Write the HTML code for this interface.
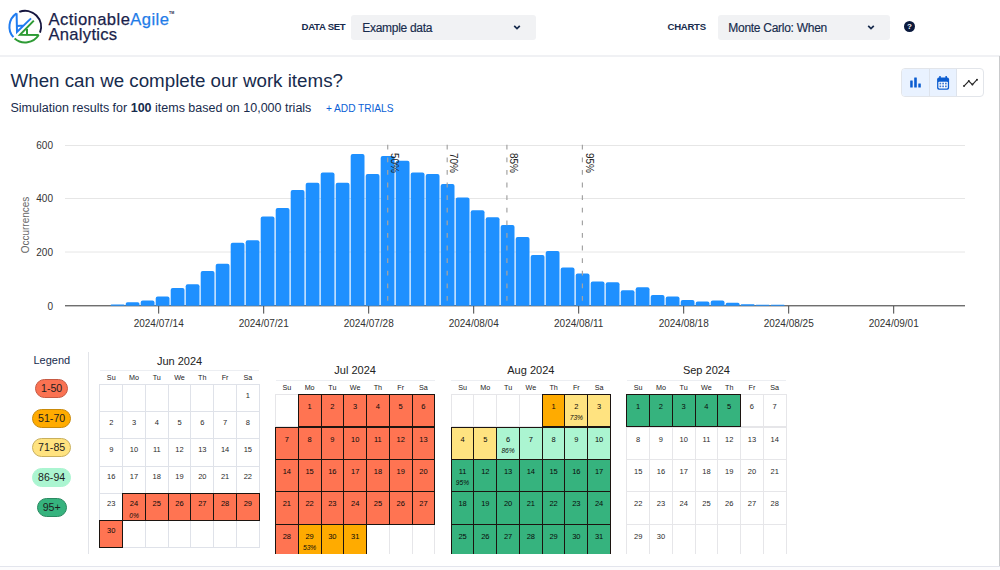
<!DOCTYPE html>
<html lang="en"><head><meta charset="utf-8"><title>ActionableAgile Analytics</title>
<style>
*{box-sizing:border-box;margin:0;padding:0}
html,body{width:1000px;height:570px;overflow:hidden;background:#fff;font-family:"Liberation Sans",Arial,sans-serif;color:#172b4d}
.abs{position:absolute}
#hdr{position:absolute;left:0;top:0;width:1000px;height:55px;background:#fff}
#hb{position:absolute;left:0;top:55px;width:1000px;height:2px;background:#f0f1f4}
#rb{position:absolute;left:998.9px;top:56px;width:1.1px;height:510.5px;background:#c9cacc}
#bb{position:absolute;left:0;top:565.8px;width:1000px;height:1.5px;background:#e3e5ed}
#bf{position:absolute;left:0;top:567.3px;width:1000px;height:2.7px;background:#fcfcfd}
.lg1{position:absolute;left:48.5px;top:9.5px;font-size:16.6px;line-height:19px;color:#1a1f4b;letter-spacing:0.43px;-webkit-text-stroke:0.25px;white-space:nowrap}
.lg1 b{font-weight:normal;color:#1f7ce8}
.lg1 sup{font-size:3.6px;font-weight:bold;-webkit-text-stroke:0;position:relative;top:-5.2px;margin-left:-0.3px;vertical-align:top;color:#1a1f4b;letter-spacing:0}
.lg2{position:absolute;left:48.5px;top:24.5px;font-size:16.6px;line-height:19px;color:#1a1f4b;letter-spacing:0.28px;-webkit-text-stroke:0.25px;white-space:nowrap}
.lab{position:absolute;font-size:9.6px;letter-spacing:-0.28px;font-weight:bold;color:#172b4d;top:20.4px;line-height:13px;white-space:nowrap}
.sel{position:absolute;top:14.6px;height:25px;background:#f1f2f4;border-radius:3px;font-size:12px;letter-spacing:-0.28px;-webkit-text-stroke:0.15px;line-height:26px;padding-left:10.8px;color:#172b4d;white-space:nowrap}
.sel svg{position:absolute;top:9.6px;margin-left:0}
h1{position:absolute;left:10.5px;top:69px;font-size:18.75px;font-weight:normal;line-height:24px;color:#172b4d;white-space:nowrap}
.sub{position:absolute;left:10.5px;top:99.5px;font-size:12.5px;line-height:16px;color:#172b4d;white-space:nowrap}
.add{position:absolute;left:326px;top:100.5px;font-size:10.2px;letter-spacing:-0.05px;line-height:16px;color:#0c5fd6;white-space:nowrap}
.tg{position:absolute;left:901.3px;top:68.4px;width:83px;height:28.2px;border:1px solid #e2e5ea;border-radius:4px;background:#fff;overflow:hidden}
.tg div{position:absolute;top:0;height:27px}
.chart{position:absolute;left:0;top:0;font-family:"Liberation Sans",Arial,sans-serif}
.legt{position:absolute;left:21.8px;width:60px;text-align:center;top:352.7px;font-size:11px;line-height:14px;color:#172b4d}
.pill{position:absolute;height:19px;border-radius:10px;border:1px solid;font-size:10.6px;line-height:17px;text-align:center;color:#1d1d1d}
#vd{position:absolute;left:87.8px;top:352px;width:1.2px;height:202px;background:#e2e4e9}
#cals{position:absolute;left:0;top:0;width:1000px;height:553.6px;overflow:hidden}
.ct{position:absolute;width:159.3px;text-align:center;font-size:11px;line-height:14px;color:#222;white-space:nowrap}
.hl{position:absolute;width:159.3px;height:1px;background:#eceef2}
.dh{position:absolute;width:22.76px;text-align:center;font-size:7.2px;color:#222}
.c{position:absolute;width:23.76px;border:1px solid #e3e5ea;margin:-0.5px 0 0 -0.5px;text-align:center;font-size:7.5px;color:#2a2a2a;}
.c.s{height:28.15px!important;padding-top:5.7px;line-height:9px}
.c.b{height:33.4px!important;padding-top:7.2px;line-height:9px}
.c.s{border-color:#dfe2e9}
.c.b{border-color:#e6e6e9}
.c.k{border:1.15px solid #1c1410;color:#0a0a0a;z-index:2}
.c.k.s{padding-top:5.55px}
.c.k.b{padding-top:7.05px}
.c i{display:block;font-size:6.7px;line-height:8px;margin-top:3.3px}
</style></head><body>
<div id="hdr">
<svg class="abs" style="left:0;top:0" width="60" height="55" viewBox="0 0 60 55" fill="none" stroke-width="2" stroke-linecap="butt" stroke-linejoin="miter">
<path d="M16.6 13.3 A16 16 0 0 0 13.4 37.2" stroke="#1f7cf0"/>
<path d="M16.6 13.3 L17 32 L31 18.4 M17.2 25.9 L23.6 25.6" stroke="#1f7cf0"/>
<path d="M19.3 11.9 A16 16 0 0 1 40 32.6" stroke="#16163f"/>
<path d="M14.6 38.5 A16 16 0 0 0 38.7 35" stroke="#2e9b35"/>
<path d="M38.7 35 L20 34.8 L33.8 20.6 M27 29 L27 34.8" stroke="#2e9b35"/>
</svg>
<div class="lg1">Actionable<b>Agile</b><sup>TM</sup></div>
<div class="lg2">Analytics</div>
<div class="lab" style="left:301.5px">DATA SET</div>
<div class="sel" style="left:351.4px;width:184.8px">Example data<svg style="left:162px" width="8" height="7" viewBox="0 0 8 7"><path d="M1.2 1.8L4 4.6L6.8 1.8" fill="none" stroke="#172b4d" stroke-width="1.7"/></svg></div>
<div class="lab" style="left:667.5px">CHARTS</div>
<div class="sel" style="left:717.5px;width:172.5px">Monte Carlo: When<svg style="left:149.5px" width="8" height="7" viewBox="0 0 8 7"><path d="M1.2 1.8L4 4.6L6.8 1.8" fill="none" stroke="#172b4d" stroke-width="1.7"/></svg></div>
<div class="abs" style="left:904px;top:21px;width:11px;height:11px;border-radius:50%;background:#0b1a3d;color:#fff;font-size:8px;font-weight:bold;line-height:11.4px;text-align:center">?</div>
</div>
<div id="hb"></div><div id="rb"></div><div id="bb"></div><div id="bf"></div>
<h1>When can we complete our work items?</h1>
<div class="sub">Simulation results for <b>100</b> items based on 10,000 trials</div>
<div class="add">+ ADD TRIALS</div>
<div class="tg">
<div style="left:0;width:27.9px;background:#e9f2ff;border-right:1px solid #dde3ec"></div>
<div style="left:27.9px;width:27.1px;background:#e9f2ff;border-right:1px solid #dde3ec"></div>
<svg class="abs" style="left:0;top:0" width="83" height="27" viewBox="901.8 68.9 83 27">
<g fill="#0b5cd0"><rect x="910" y="80.3" width="2.5" height="7.2" rx=".4"/><rect x="914" y="77.3" width="2.6" height="10.2" rx=".4"/><rect x="918.1" y="83.3" width="2.5" height="4.2" rx=".4"/></g>
<g fill="#0b5cd0"><rect x="936.9" y="77.5" width="12" height="12.2" rx="1.8"/><rect x="939" y="75.9" width="1.6" height="3" rx=".6"/><rect x="945.2" y="75.9" width="1.6" height="3" rx=".6"/></g>
<rect x="938.2" y="81.6" width="9.4" height="6.7" rx=".8" fill="#fff"/>
<g fill="#3f7bd6"><rect x="939.3" y="82.6" width="1.7" height="1.7"/><rect x="942.05" y="82.6" width="1.7" height="1.7"/><rect x="944.8" y="82.6" width="1.7" height="1.7"/><rect x="939.3" y="85.4" width="1.7" height="1.7"/><rect x="942.05" y="85.4" width="1.7" height="1.7"/><rect x="944.8" y="85.4" width="1.7" height="1.7"/></g>
<path d="M963.8 86 L968.6 81 L972.2 84.5 L976.8 79.6" fill="none" stroke="#2b2b2b" stroke-width="1.2"/>
<g fill="#2b2b2b"><circle cx="963.8" cy="86" r="1"/><circle cx="968.6" cy="81" r="1"/><circle cx="972.2" cy="84.5" r="1"/><circle cx="976.8" cy="79.6" r="1"/></g>
</svg>
</div>
<svg class="chart" width="1000" height="340" viewBox="0 0 1000 340">
<g stroke="#e6e6e6" stroke-width="1"><line x1="65" x2="965" y1="145.5" y2="145.5"/><line x1="65" x2="965" y1="198.5" y2="198.5"/><line x1="65" x2="965" y1="252" y2="252"/></g>
<line x1="65" x2="965" y1="305.8" y2="305.8" stroke="#333" stroke-width="1"/>
<g fill="#1e90ff"><path d="M110.7 305.8V305.1Q110.7 304.4 111.4 304.4H123.8Q124.5 304.4 124.5 305.1V305.8Z"/><path d="M125.7 305.8V304.0Q125.7 302.2 127.5 302.2H137.7Q139.5 302.2 139.5 304.0V305.8Z"/><path d="M140.7 305.8V302.6Q140.7 300.6 142.7 300.6H152.5Q154.5 300.6 154.5 302.6V305.8Z"/><path d="M155.7 305.8V298.6Q155.7 296.6 157.7 296.6H167.5Q169.5 296.6 169.5 298.6V305.8Z"/><path d="M170.7 305.8V290.0Q170.7 288.0 172.7 288.0H182.5Q184.5 288.0 184.5 290.0V305.8Z"/><path d="M185.7 305.8V286.2Q185.7 284.2 187.7 284.2H197.5Q199.5 284.2 199.5 286.2V305.8Z"/><path d="M200.7 305.8V273.0Q200.7 271.0 202.7 271.0H212.5Q214.5 271.0 214.5 273.0V305.8Z"/><path d="M215.7 305.8V265.7Q215.7 263.7 217.7 263.7H227.5Q229.5 263.7 229.5 265.7V305.8Z"/><path d="M230.7 305.8V244.7Q230.7 242.7 232.7 242.7H242.5Q244.5 242.7 244.5 244.7V305.8Z"/><path d="M245.7 305.8V242.2Q245.7 240.2 247.7 240.2H257.5Q259.5 240.2 259.5 242.2V305.8Z"/><path d="M260.7 305.8V218.6Q260.7 216.6 262.7 216.6H272.5Q274.5 216.6 274.5 218.6V305.8Z"/><path d="M275.7 305.8V210.1Q275.7 208.1 277.7 208.1H287.5Q289.5 208.1 289.5 210.1V305.8Z"/><path d="M290.7 305.8V192.0Q290.7 190.0 292.7 190.0H302.5Q304.5 190.0 304.5 192.0V305.8Z"/><path d="M305.7 305.8V184.8Q305.7 182.8 307.7 182.8H317.5Q319.5 182.8 319.5 184.8V305.8Z"/><path d="M320.7 305.8V174.6Q320.7 172.6 322.7 172.6H332.5Q334.5 172.6 334.5 174.6V305.8Z"/><path d="M335.7 305.8V184.8Q335.7 182.8 337.7 182.8H347.5Q349.5 182.8 349.5 184.8V305.8Z"/><path d="M350.7 305.8V155.9Q350.7 153.9 352.7 153.9H362.5Q364.5 153.9 364.5 155.9V305.8Z"/><path d="M365.7 305.8V176.0Q365.7 174.0 367.7 174.0H377.5Q379.5 174.0 379.5 176.0V305.8Z"/><path d="M380.7 305.8V158.0Q380.7 156.0 382.7 156.0H392.5Q394.5 156.0 394.5 158.0V305.8Z"/><path d="M395.7 305.8V162.8Q395.7 160.8 397.7 160.8H407.5Q409.5 160.8 409.5 162.8V305.8Z"/><path d="M410.7 305.8V174.5Q410.7 172.5 412.7 172.5H422.5Q424.5 172.5 424.5 174.5V305.8Z"/><path d="M425.7 305.8V176.1Q425.7 174.1 427.7 174.1H437.5Q439.5 174.1 439.5 176.1V305.8Z"/><path d="M440.7 305.8V186.0Q440.7 184.0 442.7 184.0H452.5Q454.5 184.0 454.5 186.0V305.8Z"/><path d="M455.7 305.8V199.6Q455.7 197.6 457.7 197.6H467.5Q469.5 197.6 469.5 199.6V305.8Z"/><path d="M470.7 305.8V212.2Q470.7 210.2 472.7 210.2H482.5Q484.5 210.2 484.5 212.2V305.8Z"/><path d="M485.7 305.8V219.2Q485.7 217.2 487.7 217.2H497.5Q499.5 217.2 499.5 219.2V305.8Z"/><path d="M500.7 305.8V227.0Q500.7 225.0 502.7 225.0H512.5Q514.5 225.0 514.5 227.0V305.8Z"/><path d="M515.7 305.8V239.1Q515.7 237.1 517.7 237.1H527.5Q529.5 237.1 529.5 239.1V305.8Z"/><path d="M530.7 305.8V256.9Q530.7 254.9 532.7 254.9H542.5Q544.5 254.9 544.5 256.9V305.8Z"/><path d="M545.7 305.8V252.9Q545.7 250.9 547.7 250.9H557.5Q559.5 250.9 559.5 252.9V305.8Z"/><path d="M560.7 305.8V269.5Q560.7 267.5 562.7 267.5H572.5Q574.5 267.5 574.5 269.5V305.8Z"/><path d="M575.7 305.8V275.5Q575.7 273.5 577.7 273.5H587.5Q589.5 273.5 589.5 275.5V305.8Z"/><path d="M590.7 305.8V283.5Q590.7 281.5 592.7 281.5H602.5Q604.5 281.5 604.5 283.5V305.8Z"/><path d="M605.7 305.8V284.2Q605.7 282.2 607.7 282.2H617.5Q619.5 282.2 619.5 284.2V305.8Z"/><path d="M620.7 305.8V292.3Q620.7 290.3 622.7 290.3H632.5Q634.5 290.3 634.5 292.3V305.8Z"/><path d="M635.7 305.8V289.2Q635.7 287.2 637.7 287.2H647.5Q649.5 287.2 649.5 289.2V305.8Z"/><path d="M650.7 305.8V297.1Q650.7 295.1 652.7 295.1H662.5Q664.5 295.1 664.5 297.1V305.8Z"/><path d="M665.7 305.8V298.4Q665.7 296.4 667.7 296.4H677.5Q679.5 296.4 679.5 298.4V305.8Z"/><path d="M680.7 305.8V301.9Q680.7 299.9 682.7 299.9H692.5Q694.5 299.9 694.5 301.9V305.8Z"/><path d="M695.7 305.8V303.5Q695.7 301.5 697.7 301.5H707.5Q709.5 301.5 709.5 303.5V305.8Z"/><path d="M710.7 305.8V302.6Q710.7 300.6 712.7 300.6H722.5Q724.5 300.6 724.5 302.6V305.8Z"/><path d="M725.7 305.8V304.3Q725.7 302.8 727.2 302.8H738.0Q739.5 302.8 739.5 304.3V305.8Z"/><path d="M740.7 305.8V305.1Q740.7 304.3 741.5 304.3H753.8Q754.5 304.3 754.5 305.1V305.8Z"/><path d="M755.7 305.8V305.3Q755.7 304.8 756.2 304.8H769.0Q769.5 304.8 769.5 305.3V305.8Z"/><path d="M770.7 305.8V305.3Q770.7 304.8 771.2 304.8H784.0Q784.5 304.8 784.5 305.3V305.8Z"/></g>
<g stroke="#a4a4a4" stroke-width="1.2" stroke-dasharray="4.8 7.8"><line x1="387.7" x2="387.7" y1="144.8" y2="305" /><line x1="447.2" x2="447.2" y1="144.8" y2="305" /><line x1="506.9" x2="506.9" y1="144.8" y2="305" /><line x1="582.4" x2="582.4" y1="144.8" y2="305" /></g>
<g font-size="10" fill="#222"><text transform="translate(390.9,153) rotate(90)">50%</text><text transform="translate(450.4,153) rotate(90)">70%</text><text transform="translate(510.09999999999997,153) rotate(90)">85%</text><text transform="translate(585.6,153) rotate(90)">95%</text></g>
<g stroke="#444" stroke-width="1"><line x1="158.7" x2="158.7" y1="306" y2="313.6"/><line x1="263.7" x2="263.7" y1="306" y2="313.6"/><line x1="368.7" x2="368.7" y1="306" y2="313.6"/><line x1="473.7" x2="473.7" y1="306" y2="313.6"/><line x1="578.7" x2="578.7" y1="306" y2="313.6"/><line x1="683.7" x2="683.7" y1="306" y2="313.6"/><line x1="788.7" x2="788.7" y1="306" y2="313.6"/><line x1="893.7" x2="893.7" y1="306" y2="313.6"/></g>
<g font-size="10" fill="#333"><text x="158.7" y="327.3" text-anchor="middle">2024/07/14</text><text x="263.7" y="327.3" text-anchor="middle">2024/07/21</text><text x="368.7" y="327.3" text-anchor="middle">2024/07/28</text><text x="473.7" y="327.3" text-anchor="middle">2024/08/04</text><text x="578.7" y="327.3" text-anchor="middle">2024/08/11</text><text x="683.7" y="327.3" text-anchor="middle">2024/08/18</text><text x="788.7" y="327.3" text-anchor="middle">2024/08/25</text><text x="893.7" y="327.3" text-anchor="middle">2024/09/01</text><text x="53" y="149" text-anchor="end">600</text><text x="53" y="202" text-anchor="end">400</text><text x="53" y="255.5" text-anchor="end">200</text><text x="53" y="309.5" text-anchor="end">0</text></g>
<text font-size="10" fill="#666" text-anchor="middle" transform="translate(28.5,225) rotate(-90)">Occurrences</text>
</svg>
<div class="legt">Legend</div>
<div class="pill" style="left:35.1px;width:33.1px;top:378.6px;background:#fa7252;border-color:#c65a43">1-50</div>
<div class="pill" style="left:32.2px;width:38.9px;top:408.5px;background:#ffab00;border-color:#c98a0a">51-70</div>
<div class="pill" style="left:32.2px;width:38.9px;top:438.3px;background:#ffe380;border-color:#c9b05c">71-85</div>
<div class="pill" style="left:32.2px;width:38.9px;top:468.2px;background:#abf5d1;border-color:#abf5d1">86-94</div>
<div class="pill" style="left:36.7px;width:29.9px;top:498px;background:#36b37e;border-color:#2a8a61">95+</div>
<div id="vd"></div>
<div id="cals">
<div class="ct" style="left:99.9px;top:354px">Jun 2024</div>
<div class="hl" style="left:99.9px;top:370px"></div>
<div class="dh" style="left:99.90px;top:371px;height:13.6px;line-height:13.6px">Su</div>
<div class="dh" style="left:122.66px;top:371px;height:13.6px;line-height:13.6px">Mo</div>
<div class="dh" style="left:145.41px;top:371px;height:13.6px;line-height:13.6px">Tu</div>
<div class="dh" style="left:168.17px;top:371px;height:13.6px;line-height:13.6px">We</div>
<div class="dh" style="left:190.93px;top:371px;height:13.6px;line-height:13.6px">Th</div>
<div class="dh" style="left:213.69px;top:371px;height:13.6px;line-height:13.6px">Fr</div>
<div class="dh" style="left:236.44px;top:371px;height:13.6px;line-height:13.6px">Sa</div>
<div class="c s" style="left:99.90px;top:384.60px;height:27.15px"></div>
<div class="c s" style="left:122.66px;top:384.60px;height:27.15px"></div>
<div class="c s" style="left:145.41px;top:384.60px;height:27.15px"></div>
<div class="c s" style="left:168.17px;top:384.60px;height:27.15px"></div>
<div class="c s" style="left:190.93px;top:384.60px;height:27.15px"></div>
<div class="c s" style="left:213.69px;top:384.60px;height:27.15px"></div>
<div class="c s" style="left:236.44px;top:384.60px;height:27.15px">1</div>
<div class="c s" style="left:99.90px;top:411.75px;height:27.15px">2</div>
<div class="c s" style="left:122.66px;top:411.75px;height:27.15px">3</div>
<div class="c s" style="left:145.41px;top:411.75px;height:27.15px">4</div>
<div class="c s" style="left:168.17px;top:411.75px;height:27.15px">5</div>
<div class="c s" style="left:190.93px;top:411.75px;height:27.15px">6</div>
<div class="c s" style="left:213.69px;top:411.75px;height:27.15px">7</div>
<div class="c s" style="left:236.44px;top:411.75px;height:27.15px">8</div>
<div class="c s" style="left:99.90px;top:438.90px;height:27.15px">9</div>
<div class="c s" style="left:122.66px;top:438.90px;height:27.15px">10</div>
<div class="c s" style="left:145.41px;top:438.90px;height:27.15px">11</div>
<div class="c s" style="left:168.17px;top:438.90px;height:27.15px">12</div>
<div class="c s" style="left:190.93px;top:438.90px;height:27.15px">13</div>
<div class="c s" style="left:213.69px;top:438.90px;height:27.15px">14</div>
<div class="c s" style="left:236.44px;top:438.90px;height:27.15px">15</div>
<div class="c s" style="left:99.90px;top:466.05px;height:27.15px">16</div>
<div class="c s" style="left:122.66px;top:466.05px;height:27.15px">17</div>
<div class="c s" style="left:145.41px;top:466.05px;height:27.15px">18</div>
<div class="c s" style="left:168.17px;top:466.05px;height:27.15px">19</div>
<div class="c s" style="left:190.93px;top:466.05px;height:27.15px">20</div>
<div class="c s" style="left:213.69px;top:466.05px;height:27.15px">21</div>
<div class="c s" style="left:236.44px;top:466.05px;height:27.15px">22</div>
<div class="c s" style="left:99.90px;top:493.20px;height:27.15px">23</div>
<div class="c k s" style="left:122.66px;top:493.20px;height:27.15px;background:#ff7452">24<i>0%</i></div>
<div class="c k s" style="left:145.41px;top:493.20px;height:27.15px;background:#ff7452">25</div>
<div class="c k s" style="left:168.17px;top:493.20px;height:27.15px;background:#ff7452">26</div>
<div class="c k s" style="left:190.93px;top:493.20px;height:27.15px;background:#ff7452">27</div>
<div class="c k s" style="left:213.69px;top:493.20px;height:27.15px;background:#ff7452">28</div>
<div class="c k s" style="left:236.44px;top:493.20px;height:27.15px;background:#ff7452">29</div>
<div class="c k s" style="left:99.90px;top:520.35px;height:27.15px;background:#ff7452">30</div>
<div class="c s" style="left:122.66px;top:520.35px;height:27.15px"></div>
<div class="c s" style="left:145.41px;top:520.35px;height:27.15px"></div>
<div class="c s" style="left:168.17px;top:520.35px;height:27.15px"></div>
<div class="c s" style="left:190.93px;top:520.35px;height:27.15px"></div>
<div class="c s" style="left:213.69px;top:520.35px;height:27.15px"></div>
<div class="c s" style="left:236.44px;top:520.35px;height:27.15px"></div>
<div class="ct" style="left:275.5px;top:363.3px">Jul 2024</div>
<div class="hl" style="left:275.5px;top:380px"></div>
<div class="dh" style="left:275.50px;top:381px;height:13.6px;line-height:13.6px">Su</div>
<div class="dh" style="left:298.26px;top:381px;height:13.6px;line-height:13.6px">Mo</div>
<div class="dh" style="left:321.01px;top:381px;height:13.6px;line-height:13.6px">Tu</div>
<div class="dh" style="left:343.77px;top:381px;height:13.6px;line-height:13.6px">We</div>
<div class="dh" style="left:366.53px;top:381px;height:13.6px;line-height:13.6px">Th</div>
<div class="dh" style="left:389.29px;top:381px;height:13.6px;line-height:13.6px">Fr</div>
<div class="dh" style="left:412.04px;top:381px;height:13.6px;line-height:13.6px">Sa</div>
<div class="c b" style="left:275.50px;top:394.60px;height:32.4px"></div>
<div class="c k b" style="left:298.26px;top:394.60px;height:32.4px;background:#ff7452">1</div>
<div class="c k b" style="left:321.01px;top:394.60px;height:32.4px;background:#ff7452">2</div>
<div class="c k b" style="left:343.77px;top:394.60px;height:32.4px;background:#ff7452">3</div>
<div class="c k b" style="left:366.53px;top:394.60px;height:32.4px;background:#ff7452">4</div>
<div class="c k b" style="left:389.29px;top:394.60px;height:32.4px;background:#ff7452">5</div>
<div class="c k b" style="left:412.04px;top:394.60px;height:32.4px;background:#ff7452">6</div>
<div class="c k b" style="left:275.50px;top:427.00px;height:32.4px;background:#ff7452">7</div>
<div class="c k b" style="left:298.26px;top:427.00px;height:32.4px;background:#ff7452">8</div>
<div class="c k b" style="left:321.01px;top:427.00px;height:32.4px;background:#ff7452">9</div>
<div class="c k b" style="left:343.77px;top:427.00px;height:32.4px;background:#ff7452">10</div>
<div class="c k b" style="left:366.53px;top:427.00px;height:32.4px;background:#ff7452">11</div>
<div class="c k b" style="left:389.29px;top:427.00px;height:32.4px;background:#ff7452">12</div>
<div class="c k b" style="left:412.04px;top:427.00px;height:32.4px;background:#ff7452">13</div>
<div class="c k b" style="left:275.50px;top:459.40px;height:32.4px;background:#ff7452">14</div>
<div class="c k b" style="left:298.26px;top:459.40px;height:32.4px;background:#ff7452">15</div>
<div class="c k b" style="left:321.01px;top:459.40px;height:32.4px;background:#ff7452">16</div>
<div class="c k b" style="left:343.77px;top:459.40px;height:32.4px;background:#ff7452">17</div>
<div class="c k b" style="left:366.53px;top:459.40px;height:32.4px;background:#ff7452">18</div>
<div class="c k b" style="left:389.29px;top:459.40px;height:32.4px;background:#ff7452">19</div>
<div class="c k b" style="left:412.04px;top:459.40px;height:32.4px;background:#ff7452">20</div>
<div class="c k b" style="left:275.50px;top:491.80px;height:32.4px;background:#ff7452">21</div>
<div class="c k b" style="left:298.26px;top:491.80px;height:32.4px;background:#ff7452">22</div>
<div class="c k b" style="left:321.01px;top:491.80px;height:32.4px;background:#ff7452">23</div>
<div class="c k b" style="left:343.77px;top:491.80px;height:32.4px;background:#ff7452">24</div>
<div class="c k b" style="left:366.53px;top:491.80px;height:32.4px;background:#ff7452">25</div>
<div class="c k b" style="left:389.29px;top:491.80px;height:32.4px;background:#ff7452">26</div>
<div class="c k b" style="left:412.04px;top:491.80px;height:32.4px;background:#ff7452">27</div>
<div class="c k b" style="left:275.50px;top:524.20px;height:32.4px;background:#ff7452">28</div>
<div class="c k b" style="left:298.26px;top:524.20px;height:32.4px;background:#ffab00">29<i>53%</i></div>
<div class="c k b" style="left:321.01px;top:524.20px;height:32.4px;background:#ffab00">30</div>
<div class="c k b" style="left:343.77px;top:524.20px;height:32.4px;background:#ffab00">31</div>
<div class="c b" style="left:366.53px;top:524.20px;height:32.4px"></div>
<div class="c b" style="left:389.29px;top:524.20px;height:32.4px"></div>
<div class="c b" style="left:412.04px;top:524.20px;height:32.4px"></div>
<div class="ct" style="left:451.2px;top:363.3px">Aug 2024</div>
<div class="hl" style="left:451.2px;top:380px"></div>
<div class="dh" style="left:451.20px;top:381px;height:13.6px;line-height:13.6px">Su</div>
<div class="dh" style="left:473.96px;top:381px;height:13.6px;line-height:13.6px">Mo</div>
<div class="dh" style="left:496.71px;top:381px;height:13.6px;line-height:13.6px">Tu</div>
<div class="dh" style="left:519.47px;top:381px;height:13.6px;line-height:13.6px">We</div>
<div class="dh" style="left:542.23px;top:381px;height:13.6px;line-height:13.6px">Th</div>
<div class="dh" style="left:564.99px;top:381px;height:13.6px;line-height:13.6px">Fr</div>
<div class="dh" style="left:587.74px;top:381px;height:13.6px;line-height:13.6px">Sa</div>
<div class="c b" style="left:451.20px;top:394.60px;height:32.4px"></div>
<div class="c b" style="left:473.96px;top:394.60px;height:32.4px"></div>
<div class="c b" style="left:496.71px;top:394.60px;height:32.4px"></div>
<div class="c b" style="left:519.47px;top:394.60px;height:32.4px"></div>
<div class="c k b" style="left:542.23px;top:394.60px;height:32.4px;background:#ffab00">1</div>
<div class="c k b" style="left:564.99px;top:394.60px;height:32.4px;background:#ffe380">2<i>73%</i></div>
<div class="c k b" style="left:587.74px;top:394.60px;height:32.4px;background:#ffe380">3</div>
<div class="c k b" style="left:451.20px;top:427.00px;height:32.4px;background:#ffe380">4</div>
<div class="c k b" style="left:473.96px;top:427.00px;height:32.4px;background:#ffe380">5</div>
<div class="c k b" style="left:496.71px;top:427.00px;height:32.4px;background:#abf5d1">6<i>86%</i></div>
<div class="c k b" style="left:519.47px;top:427.00px;height:32.4px;background:#abf5d1">7</div>
<div class="c k b" style="left:542.23px;top:427.00px;height:32.4px;background:#abf5d1">8</div>
<div class="c k b" style="left:564.99px;top:427.00px;height:32.4px;background:#abf5d1">9</div>
<div class="c k b" style="left:587.74px;top:427.00px;height:32.4px;background:#abf5d1">10</div>
<div class="c k b" style="left:451.20px;top:459.40px;height:32.4px;background:#36b37e">11<i>95%</i></div>
<div class="c k b" style="left:473.96px;top:459.40px;height:32.4px;background:#36b37e">12</div>
<div class="c k b" style="left:496.71px;top:459.40px;height:32.4px;background:#36b37e">13</div>
<div class="c k b" style="left:519.47px;top:459.40px;height:32.4px;background:#36b37e">14</div>
<div class="c k b" style="left:542.23px;top:459.40px;height:32.4px;background:#36b37e">15</div>
<div class="c k b" style="left:564.99px;top:459.40px;height:32.4px;background:#36b37e">16</div>
<div class="c k b" style="left:587.74px;top:459.40px;height:32.4px;background:#36b37e">17</div>
<div class="c k b" style="left:451.20px;top:491.80px;height:32.4px;background:#36b37e">18</div>
<div class="c k b" style="left:473.96px;top:491.80px;height:32.4px;background:#36b37e">19</div>
<div class="c k b" style="left:496.71px;top:491.80px;height:32.4px;background:#36b37e">20</div>
<div class="c k b" style="left:519.47px;top:491.80px;height:32.4px;background:#36b37e">21</div>
<div class="c k b" style="left:542.23px;top:491.80px;height:32.4px;background:#36b37e">22</div>
<div class="c k b" style="left:564.99px;top:491.80px;height:32.4px;background:#36b37e">23</div>
<div class="c k b" style="left:587.74px;top:491.80px;height:32.4px;background:#36b37e">24</div>
<div class="c k b" style="left:451.20px;top:524.20px;height:32.4px;background:#36b37e">25</div>
<div class="c k b" style="left:473.96px;top:524.20px;height:32.4px;background:#36b37e">26</div>
<div class="c k b" style="left:496.71px;top:524.20px;height:32.4px;background:#36b37e">27</div>
<div class="c k b" style="left:519.47px;top:524.20px;height:32.4px;background:#36b37e">28</div>
<div class="c k b" style="left:542.23px;top:524.20px;height:32.4px;background:#36b37e">29</div>
<div class="c k b" style="left:564.99px;top:524.20px;height:32.4px;background:#36b37e">30</div>
<div class="c k b" style="left:587.74px;top:524.20px;height:32.4px;background:#36b37e">31</div>
<div class="ct" style="left:626.8px;top:363.3px">Sep 2024</div>
<div class="hl" style="left:626.8px;top:380px"></div>
<div class="dh" style="left:626.80px;top:381px;height:13.6px;line-height:13.6px">Su</div>
<div class="dh" style="left:649.56px;top:381px;height:13.6px;line-height:13.6px">Mo</div>
<div class="dh" style="left:672.31px;top:381px;height:13.6px;line-height:13.6px">Tu</div>
<div class="dh" style="left:695.07px;top:381px;height:13.6px;line-height:13.6px">We</div>
<div class="dh" style="left:717.83px;top:381px;height:13.6px;line-height:13.6px">Th</div>
<div class="dh" style="left:740.59px;top:381px;height:13.6px;line-height:13.6px">Fr</div>
<div class="dh" style="left:763.34px;top:381px;height:13.6px;line-height:13.6px">Sa</div>
<div class="c k b" style="left:626.80px;top:394.60px;height:32.4px;background:#36b37e">1</div>
<div class="c k b" style="left:649.56px;top:394.60px;height:32.4px;background:#36b37e">2</div>
<div class="c k b" style="left:672.31px;top:394.60px;height:32.4px;background:#36b37e">3</div>
<div class="c k b" style="left:695.07px;top:394.60px;height:32.4px;background:#36b37e">4</div>
<div class="c k b" style="left:717.83px;top:394.60px;height:32.4px;background:#36b37e">5</div>
<div class="c b" style="left:740.59px;top:394.60px;height:32.4px">6</div>
<div class="c b" style="left:763.34px;top:394.60px;height:32.4px">7</div>
<div class="c b" style="left:626.80px;top:427.00px;height:32.4px">8</div>
<div class="c b" style="left:649.56px;top:427.00px;height:32.4px">9</div>
<div class="c b" style="left:672.31px;top:427.00px;height:32.4px">10</div>
<div class="c b" style="left:695.07px;top:427.00px;height:32.4px">11</div>
<div class="c b" style="left:717.83px;top:427.00px;height:32.4px">12</div>
<div class="c b" style="left:740.59px;top:427.00px;height:32.4px">13</div>
<div class="c b" style="left:763.34px;top:427.00px;height:32.4px">14</div>
<div class="c b" style="left:626.80px;top:459.40px;height:32.4px">15</div>
<div class="c b" style="left:649.56px;top:459.40px;height:32.4px">16</div>
<div class="c b" style="left:672.31px;top:459.40px;height:32.4px">17</div>
<div class="c b" style="left:695.07px;top:459.40px;height:32.4px">18</div>
<div class="c b" style="left:717.83px;top:459.40px;height:32.4px">19</div>
<div class="c b" style="left:740.59px;top:459.40px;height:32.4px">20</div>
<div class="c b" style="left:763.34px;top:459.40px;height:32.4px">21</div>
<div class="c b" style="left:626.80px;top:491.80px;height:32.4px">22</div>
<div class="c b" style="left:649.56px;top:491.80px;height:32.4px">23</div>
<div class="c b" style="left:672.31px;top:491.80px;height:32.4px">24</div>
<div class="c b" style="left:695.07px;top:491.80px;height:32.4px">25</div>
<div class="c b" style="left:717.83px;top:491.80px;height:32.4px">26</div>
<div class="c b" style="left:740.59px;top:491.80px;height:32.4px">27</div>
<div class="c b" style="left:763.34px;top:491.80px;height:32.4px">28</div>
<div class="c b" style="left:626.80px;top:524.20px;height:32.4px">29</div>
<div class="c b" style="left:649.56px;top:524.20px;height:32.4px">30</div>
<div class="c b" style="left:672.31px;top:524.20px;height:32.4px"></div>
<div class="c b" style="left:695.07px;top:524.20px;height:32.4px"></div>
<div class="c b" style="left:717.83px;top:524.20px;height:32.4px"></div>
<div class="c b" style="left:740.59px;top:524.20px;height:32.4px"></div>
<div class="c b" style="left:763.34px;top:524.20px;height:32.4px"></div>
</div>
</body></html>
